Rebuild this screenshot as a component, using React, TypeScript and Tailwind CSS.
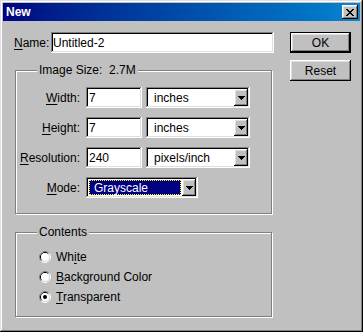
import React from "react";

const raised =
  "shadow-[inset_-1px_-1px_#000,inset_1px_1px_#fff,inset_-2px_-2px_#808080,inset_2px_2px_#dfdfdf]";
const sunken =
  "shadow-[inset_-1px_-1px_#fff,inset_1px_1px_#808080,inset_-2px_-2px_#dfdfdf,inset_2px_2px_#000]";

function Pixels({ rows, className }: { rows: string[]; className?: string }) {
  const w = rows[0].length;
  const h = rows.length;
  return (
    <svg width={w} height={h} viewBox={`0 0 ${w} ${h}`} className={className} shapeRendering="crispEdges">
      {rows.flatMap((r, y) =>
        r.split("").map((c, x) => (c === "X" ? <rect key={`${x}-${y}`} x={x} y={y} width={1} height={1} fill="#000" /> : null))
      )}
    </svg>
  );
}

const closeX = ["XX....XX", ".XX..XX.", "..XXXX..", "...XX...", "..XXXX..", ".XX..XX.", "XX....XX"];
const downArrow = ["XXXXXXX", ".XXXXX.", "..XXX..", "...X..."];

function Mn({ children }: { children: React.ReactNode }) {
  return <span className="underline underline-offset-[2px]">{children}</span>;
}

function Combo({ value, width, selected }: { value: string; width: string; selected?: boolean }) {
  return (
    <div className={`flex h-[21px] ${width} bg-white p-[2px] ${sunken}`}>
      {selected ? (
        <div className="flex-1 m-[1px] mr-[1px] bg-[#000080] border border-dotted border-[#ffff00] text-white flex items-center pl-[4px]">
          {value}
        </div>
      ) : (
        <div className="flex-1 flex items-center pl-[6px]">{value}</div>
      )}
      <div className={`w-[14px] h-full bg-[#c0c0c0] flex items-center justify-center ${raised}`}>
        <Pixels rows={downArrow} />
      </div>
    </div>
  );
}

function Field({ value, width }: { value: string; width: string }) {
  return (
    <div className={`h-[21px] ${width} bg-white flex items-center pl-[3px] ${sunken}`}>{value}</div>
  );
}

function Row({ label, value, unit }: { label: React.ReactNode; value: string; unit: string }) {
  return (
    <div className="flex items-center">
      <div className="w-[64px] text-right">{label}</div>
      <Field value={value} width="w-[56px] ml-[6px]" />
      <div className="ml-[4px]">
        <Combo value={unit} width="w-[104px]" />
      </div>
    </div>
  );
}

function Radio({ checked, label }: { checked?: boolean; label: React.ReactNode }) {
  return (
    <div className="flex items-center h-[20px] pl-[23px]">
      <svg width="12" height="12" viewBox="0 0 12 12">
        <path d="M9.89 2.11 A5.5 5.5 0 0 0 2.11 9.89" fill="none" stroke="#808080" />
        <path d="M2.11 9.89 A5.5 5.5 0 0 0 9.89 2.11" fill="none" stroke="#fff" />
        <path d="M9.18 2.82 A4.5 4.5 0 0 0 2.82 9.18" fill="none" stroke="#000" />
        <path d="M2.82 9.18 A4.5 4.5 0 0 0 9.18 2.82" fill="none" stroke="#dfdfdf" />
        <circle cx="6" cy="6" r="4" fill="#fff" />
        {checked && <circle cx="6" cy="6" r="2" fill="#000" />}
      </svg>
      <span className="ml-[5px]">{label}</span>
    </div>
  );
}

function Group({ title, className, children }: { title: string; className: string; children: React.ReactNode }) {
  return (
    <div
      className={`relative ml-[1px] w-[257px] border border-[#808080] shadow-[inset_1px_1px_#fff,1px_1px_#fff] ${className}`}
    >
      <span className="absolute -top-[8px] left-[21px] px-[2px] bg-[#c0c0c0] leading-[14px] whitespace-pre">
        {title}
      </span>
      {children}
    </div>
  );
}

export default function App() {
  return (
    <div
      className="w-[363px] h-[332px] bg-[#c0c0c0] p-[3px] text-[12px] leading-[14px] text-black shadow-[inset_-1px_-1px_#000,inset_1px_1px_#dfdfdf,inset_-2px_-2px_#808080,inset_2px_2px_#fff] select-none"
      style={{ fontFamily: '"Liberation Sans", Arial, sans-serif' }}
    >
      <div className="h-[18px] flex items-center justify-between bg-gradient-to-r from-[#000080] to-[#1084d0] pl-[3px] pr-[2px]">
        <span className="font-bold text-white">New</span>
        <div className={`w-[16px] h-[14px] bg-[#c0c0c0] flex items-center justify-center ${raised}`}>
          <Pixels rows={closeX} className="ml-[-1px]" />
        </div>
      </div>

      <div className="flex pt-[11px] pl-[11px]">
        <div className="flex flex-col">
          <div className="flex items-center">
            <div className="w-[37px]">
              <Mn>N</Mn>ame:
            </div>
            <div className={`h-[21px] w-[223px] bg-white flex items-center pl-[2px] ${sunken}`}>Untitled-2</div>
          </div>

          <Group title="Image Size:  2.7M" className="mt-[17px] pt-[16px] pb-[15px]">
            <div className="flex flex-col gap-[9px]">
              <Row label={<><Mn>W</Mn>idth:</>} value="7" unit="inches" />
              <Row label={<><Mn>H</Mn>eight:</>} value="7" unit="inches" />
              <Row label={<><Mn>R</Mn>esolution:</>} value="240" unit="pixels/inch" />
              <div className="flex items-center">
                <div className="w-[64px] text-right">
                  <Mn>M</Mn>ode:
                </div>
                <div className="ml-[6px]">
                  <Combo value="Grayscale" width="w-[112px]" selected />
                </div>
              </div>
            </div>
          </Group>

          <Group title="Contents" className="mt-[18px] pt-[14px] pb-[9px]">
            <Radio label={<>Wh<Mn>i</Mn>te</>} />
            <Radio label={<><Mn>B</Mn>ackground Color</>} />
            <Radio checked label={<><Mn>T</Mn>ransparent</>} />
          </Group>
        </div>

        <div className="ml-[16px] flex flex-col gap-[7px]">
          <div className="w-[61px] h-[21px] border border-black">
            <div className={`w-full h-full flex items-center justify-center ${raised}`}>OK</div>
          </div>
          <div className={`w-[61px] h-[21px] flex items-center justify-center ${raised}`}>Reset</div>
        </div>
      </div>
    </div>
  );
}
